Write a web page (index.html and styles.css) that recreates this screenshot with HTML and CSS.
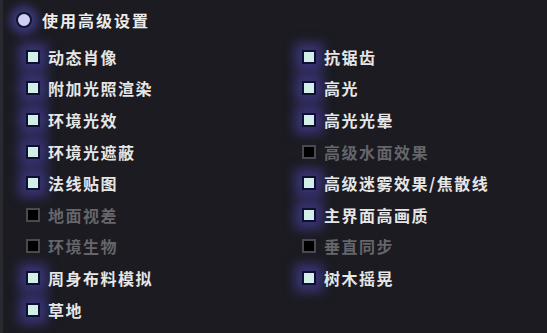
FILE: index.html
```html
<!DOCTYPE html>
<html lang="zh-CN">
<head>
    <meta charset="UTF-8">
    <meta name="viewport" content="width=device-width, initial-scale=1.0">
    <title>高级设置</title>
    <link rel="stylesheet" href="styles.css">
</head>
<body>
    <div class="panel">
        <div class="header">
            <span class="radio"></span>
            <span class="title">使用高级设置</span>
        </div>
        <div class="options">
            <div class="col">
                <div class="opt"><span class="box on"></span>动态肖像</div>
                <div class="opt"><span class="box on"></span>附加光照渲染</div>
                <div class="opt"><span class="box on"></span>环境光效</div>
                <div class="opt"><span class="box on"></span>环境光遮蔽</div>
                <div class="opt"><span class="box on"></span>法线贴图</div>
                <div class="opt off"><span class="box"></span>地面视差</div>
                <div class="opt off"><span class="box"></span>环境生物</div>
                <div class="opt"><span class="box on"></span>周身布料模拟</div>
                <div class="opt"><span class="box on"></span>草地</div>
            </div>
            <div class="col">
                <div class="opt"><span class="box on"></span>抗锯齿</div>
                <div class="opt"><span class="box on"></span>高光</div>
                <div class="opt"><span class="box on"></span>高光光晕</div>
                <div class="opt off"><span class="box"></span>高级水面效果</div>
                <div class="opt"><span class="box on"></span>高级迷雾效果/焦散线</div>
                <div class="opt"><span class="box on"></span>主界面高画质</div>
                <div class="opt off"><span class="box"></span>垂直同步</div>
                <div class="opt"><span class="box on"></span>树木摇晃</div>
            </div>
        </div>
    </div>
</body>
</html>
```

FILE: styles.css
```css
body {
    margin: 0;
    padding: 0;
    background-color: #1b1b21;
    font-family: "Noto Sans CJK SC", "Noto Sans", sans-serif;
    overflow: hidden;
}

.panel {
    width: 547px;
    height: 333px;
    border-left: 3px solid #292930;
    box-sizing: border-box;
}

.header {
    display: flex;
    align-items: center;
    height: 40px;
    padding-left: 13px;
    gap: 10px;
}

.radio {
    width: 12px;
    height: 12px;
    border-radius: 50%;
    background-color: #cfcef5;
    border: 2px solid #12142e;
    box-shadow: 0 0 10px 6px rgba(96, 88, 215, 0.5);
}

.title {
    color: #ececec;
    font-size: 16px;
    font-weight: bold;
    letter-spacing: 2px;
}

.options {
    display: grid;
    grid-template-columns: 276px 1fr;
    padding-left: 23px;
    padding-top: 1px;
}

.opt {
    display: flex;
    align-items: center;
    height: 31.6px;
    gap: 8px;
    color: #e6e6e6;
    font-size: 16px;
    font-weight: bold;
    letter-spacing: 1.5px;
}

.opt.off {
    color: #65656a;
}

.box {
    width: 10px;
    height: 10px;
    border: 2px solid #4a4a4e;
    background-color: #000;
    flex-shrink: 0;
}

.box.on {
    background-color: #d3ede8;
    border-color: #0d1130;
    box-shadow: 0 0 12px 7px rgba(88, 78, 205, 0.5);
}
```
